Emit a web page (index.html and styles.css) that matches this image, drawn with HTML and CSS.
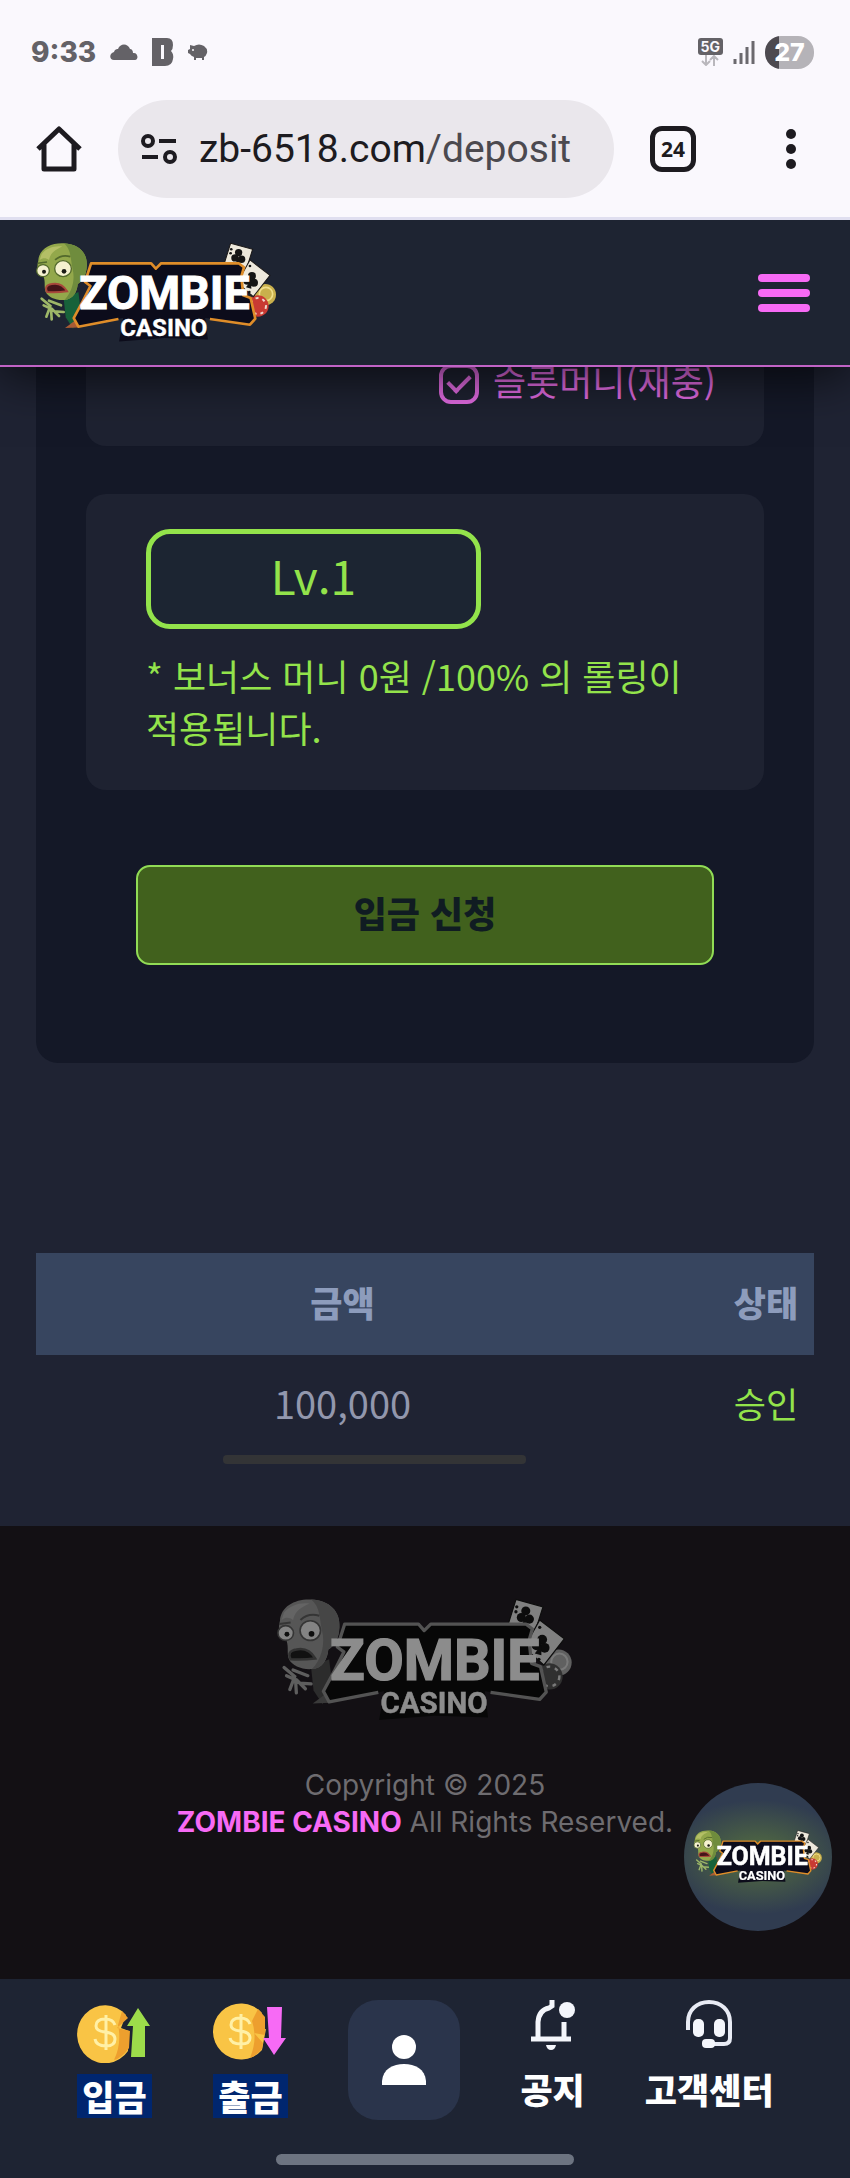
FILE: index.html
```html
<!DOCTYPE html>
<html lang="ko">
<head>
    <meta charset="UTF-8">
    <meta name="viewport" content="width=device-width, initial-scale=1.0">
    <title>ZOMBIE CASINO</title>
    <link rel="stylesheet" href="styles.css">
</head>
<body>
    <div class="status-bar">
        <div class="status-left">
            <span class="clock">9:33</span>
            <svg width="28" height="16" viewBox="0 0 28 16"><path d="M4 16 C-1 16 -1 9 4 8 C5 5 7 5 8 5 C10 -1 18 -1 20 5 C22 5 23 7 23 9 C28 8 29 16 25 16 Z" fill="#646267"/></svg>
            <svg width="22" height="28" viewBox="0 0 22 28"><path d="M0 0 H15 Q21 0 21 7 Q21 11 19 13 Q22 16 21 21 Q20 28 13 28 H0 Z" fill="#646267"/><path d="M9 7 H12 V21 H9 Z" fill="#faf8fd"/></svg>
            <svg width="20" height="16" viewBox="0 0 20 16"><path d="M2 1 L6 2 Q11 -1 16 2 Q20 5 19 9 Q18 12 16 13 V16 H14 V14 H8 V16 H6 V13 Q3 12 2 10 L0 9 V6 L2 5 Z" fill="#646267"/><circle cx="5" cy="6" r="1" fill="#faf8fd"/></svg>
        </div>
        <div class="status-right">
            <div class="network">
                <span class="network-type">5G</span>
                <svg width="18" height="11" viewBox="0 0 18 11"><path d="M5 0 V10 M1 6 L5 10 L9 6 M13 11 V1 M9 5 L13 1 L17 5" fill="none" stroke="#b9b7bc" stroke-width="2"/></svg>
            </div>
            <svg width="22" height="23" viewBox="0 0 22 23"><path d="M2 18 V23 M8 12 V23 M14 6 V23 M20 0 V23" stroke="#6b696e" stroke-width="3"/></svg>
            <span class="battery">27</span>
        </div>
    </div>

    <div class="browser-bar">
        <button class="browser-btn" aria-label="Home">
            <svg width="46" height="46" viewBox="0 0 46 46"><path d="M2 23 L23 3 L44 23 M8 18 V43 H38 V18" fill="none" stroke="#1d1b20" stroke-width="5" stroke-linejoin="round"/></svg>
        </button>
        <button class="address">
            <svg width="38" height="32" viewBox="0 0 38 32"><g fill="none" stroke="#1d1b20" stroke-width="4"><circle cx="8" cy="8" r="5"/><path d="M19 8 H36 M2 24 H18"/><circle cx="30" cy="24" r="5"/></g></svg>
            <span class="url">zb-6518.com<span class="url-path">/deposit</span></span>
        </button>
        <button class="browser-btn tab-count" aria-label="Tabs">24</button>
        <button class="browser-btn more" aria-label="More">
            <svg width="10" height="40" viewBox="0 0 10 40"><g fill="#1d1b20"><circle cx="5" cy="5" r="5"/><circle cx="5" cy="20" r="5"/><circle cx="5" cy="35" r="5"/></g></svg>
        </button>
    </div>

    <header class="site-header">
        <a href="#" aria-label="ZOMBIE CASINO">
            <svg class="logo" viewBox="40 60 740 310">
                <g id="logo">
                    <!-- zombie -->
                    <path d="M132 232 L176 212 L182 262 L160 322 L138 288 Z" fill="#17623a"/>
                    <path d="M136 320 L168 296 L178 318 Z" fill="#a85b35"/>
                    <path d="M56 118 C58 82 94 64 132 66 C178 68 204 96 201 134 C200 160 190 180 174 188 C172 212 160 234 134 236 C110 238 86 228 78 212 C72 196 78 184 72 166 C54 160 50 140 56 118 Z" fill="#93a84b"/>
                    <path d="M132 66 C178 68 204 96 201 134 C200 160 190 180 174 188 C172 212 160 234 134 236 C156 214 168 176 158 140 C152 108 154 84 132 66 Z" fill="#6f8c3d"/>
                    <path d="M66 98 C80 80 108 72 128 76 C110 84 92 94 88 116 C80 110 70 108 60 116 Z" fill="#b4bf66"/>
                    <ellipse cx="70" cy="148" rx="19" ry="18" fill="#f5f1cf" stroke="#53692c" stroke-width="4"/>
                    <ellipse cx="130" cy="142" rx="25" ry="24" fill="#f5f1cf" stroke="#53692c" stroke-width="4"/>
                    <circle cx="73" cy="151" r="6" fill="#1b1b16"/>
                    <circle cx="133" cy="150" r="7" fill="#1b1b16"/>
                    <path d="M54 126 L82 122 M106 116 Q126 98 152 106" fill="none" stroke="#53692c" stroke-width="5"/>
                    <path d="M82 212 Q72 192 96 188 Q126 182 142 210 Q112 214 82 212 Z" fill="#451419" stroke="#a8483b" stroke-width="6"/>
                    <path d="M66 232 L92 254 L80 286 M72 252 L94 262 L96 294 M88 238 L124 252 M96 262 L118 284 M104 270 L132 272" fill="none" stroke="#9db768" stroke-width="8" stroke-linecap="round"/>
                    <!-- chips and cards -->
                    <circle cx="736" cy="220" r="32" fill="#c9b04c"/>
                    <circle cx="738" cy="218" r="20" fill="none" stroke="#f1df8a" stroke-width="5"/>
                    <circle cx="714" cy="254" r="32" fill="#c93a33"/>
                    <circle cx="714" cy="254" r="24" fill="none" stroke="#f0d9cf" stroke-width="6" stroke-dasharray="9 12"/>
                    <path d="M632 66 L698 84 L678 148 L612 130 Z" fill="#eee9dc" stroke="#1a1716" stroke-width="3"/>
                    <path d="M690 116 L750 162 L700 226 L652 184 Z" fill="#eee9dc" stroke="#1a1716" stroke-width="3"/>
                    <g fill="#151515">
                        <circle cx="656" cy="94" r="11"/><circle cx="645" cy="110" r="11"/><circle cx="665" cy="114" r="11"/>
                        <path d="M654 106 L646 130 L662 132 Z"/>
                        <circle cx="696" cy="164" r="12"/><circle cx="682" cy="178" r="12"/><circle cx="702" cy="184" r="12"/>
                        <path d="M694 176 L678 198 L694 202 Z"/>
                        <circle cx="634" cy="84" r="4"/><circle cx="632" cy="96" r="4"/>
                        <circle cx="690" cy="134" r="4"/><circle cx="688" cy="212" r="4"/>
                    </g>
                    <!-- plate -->
                    <path d="M214 126 L394 126 L408 142 L424 126 L656 126 L672 138 L664 166 L670 222 L692 230 L706 292 L690 310 L556 290 L564 354 L434 350 L298 360 L310 290 L176 316 L162 290 L190 238 L212 194 L196 182 Z" fill="#0c0c1b"/>
                    <path d="M296 293 L176 316 L162 290 L190 238 L212 194 L196 182 L214 126 L394 126 L408 142 L424 126 L656 126 L672 138 L664 166 L670 222 L692 230 L706 292 L690 310 L570 293" fill="none" stroke="#df8d29" stroke-width="8" stroke-linejoin="round"/>
                    <text class="logo-zombie" x="434" y="262" text-anchor="middle">ZOMBIE</text>
                    <text class="logo-casino" x="432" y="344" text-anchor="middle">CASINO</text>
                </g>
            </svg>
        </a>
        <button class="menu-btn" aria-label="메뉴"><span></span><span></span><span></span></button>
    </header>

    <main class="content">
        <section class="deposit">
            <div class="box bonus-box">
                <label class="check"><input type="checkbox" checked><span>슬롯머니(재충)</span></label>
            </div>
            <div class="box level-box">
                <button class="level">Lv.1</button>
                <p class="notice">* 보너스 머니 0원 /100% 의 롤링이 적용됩니다.</p>
            </div>
            <button class="submit">입금 신청</button>
        </section>

        <table class="history">
            <thead>
                <tr><th>금액</th><th>상태</th></tr>
            </thead>
            <tbody>
                <tr><td class="amount">100,000</td><td class="approved">승인</td></tr>
            </tbody>
        </table>
        <div class="scroll-thumb"></div>
    </main>

    <footer class="site-footer">
        <svg class="logo" viewBox="40 60 740 310"><use href="#logo"/></svg>
        <p>Copyright © 2025<br><strong>ZOMBIE CASINO</strong> All Rights Reserved.</p>
    </footer>

    <a class="floating" href="#" aria-label="ZOMBIE CASINO"><svg class="logo" viewBox="40 60 740 310"><use href="#logo"/></svg></a>

    <nav class="bottom-nav">
        <div class="nav-items">
            <a class="nav-item money" href="#">
                <svg width="76" height="60" viewBox="0 0 76 60">
                    <path d="M50 12 A28 29 0 1 0 52 48 L53 28 L45 25 Z" fill="#f9c445"/>
                    <path d="M46 8 L52 15 L41 25 L54 28 L53 45 Q46 55 38 57 Q46 40 42 22 Z" fill="#ed9f2e"/>
                    <path d="M39 22 Q37 16 29 16 Q20 16 20 23 Q20 28 29 29 Q39 30 39 36 Q39 43 30 43 Q20 43 19 36 M30 12 V47" fill="none" stroke="#fff0a6" stroke-width="3"/>
                    <path d="M62 5 L74 23 H69 V54 H55 L57 23 H51 Z" fill="#9ddc4a"/>
                </svg>
                <span class="marked">입금</span>
            </a>
            <a class="nav-item money" href="#">
                <svg width="76" height="60" viewBox="0 0 76 60">
                    <path d="M50 10 A28 28 0 1 0 50 47 L54 26 L44 28 Z" fill="#f9c445"/>
                    <path d="M46 6 L53 14 L53 32 L42 30 L51 40 L50 46 Q44 53 38 55 Q46 36 40 18 Z" fill="#ed9f2e"/>
                    <path d="M38 21 Q36 15 28 15 Q19 15 19 22 Q19 27 28 28 Q38 29 38 35 Q38 41 29 41 Q19 41 18 35 M29 11 V46" fill="none" stroke="#fff0a6" stroke-width="3"/>
                    <path d="M55 4 H70 L69 35 H74 L62 52 L51 35 H57 Z" fill="#f76af5"/>
                </svg>
                <span class="marked">출금</span>
            </a>
            <a class="nav-user" href="#" aria-label="내 정보">
                <svg width="46" height="50" viewBox="0 0 46 50"><circle cx="23" cy="12" r="12" fill="#fff"/><path d="M1 50 V46 C2 34 12 29 23 29 C34 29 44 34 45 46 V50 Z" fill="#fff"/></svg>
            </a>
            <a class="nav-item" href="#">
                <svg width="44" height="50" viewBox="0 0 44 50"><g fill="none" stroke="#f4f6fb" stroke-width="5"><path d="M7 38 V22 Q8 10 18 8 L21 6 V0 M33 22 V38"/><path d="M0 39 H40"/></g><circle cx="36" cy="10" r="8" fill="#f4f6fb"/><path d="M15 45 H25 Q24 50 20 50 Q16 50 15 45 Z" fill="#f4f6fb"/></svg>
                <span>공지</span>
            </a>
            <a class="nav-item" href="#">
                <svg width="48" height="50" viewBox="0 0 48 50"><path d="M3 30 V22 C3 10 12 2 24 2 C36 2 45 10 45 22 V38 Q45 44 39 44 H24" fill="none" stroke="#e8ebf4" stroke-width="4"/><g fill="#f4f6fb"><rect x="8" y="19" width="11" height="18" rx="5"/><rect x="29" y="19" width="11" height="18" rx="5"/><rect x="17" y="39" width="13" height="9" rx="4"/></g></svg>
                <span>고객센터</span>
            </a>
        </div>
        <div class="home-indicator"></div>
    </nav>
</body>
</html>
```
FILE: styles.css
```css
* {
    box-sizing: border-box;
}
body {
    margin: 0;
    background-color: #1f2333;
    color: #ffffff;
    font-family: "Noto Sans CJK KR", sans-serif;
}
button {
    padding: 0;
    border: none;
    background: none;
    font-family: inherit;
    color: inherit;
    cursor: pointer;
}
a {
    color: inherit;
    text-decoration: none;
}
svg {
    display: block;
}

/* Logo */
.logo {
    width: 247px;
    height: 104px;
}
.logo-zombie,
.logo-casino {
    font-family: Roboto, sans-serif;
    font-weight: 700;
    fill: #ffffff;
    stroke: #ffffff;
    stroke-width: 3px;
}
.logo-zombie {
    font-size: 140px;
}
.logo-casino {
    font-size: 72px;
    stroke-width: 1px;
}

/* Phone status bar */
.status-bar {
    display: flex;
    justify-content: space-between;
    align-items: center;
    height: 100px;
    padding: 4px 36px 0 31px;
    background-color: #faf8fd;
    color: #646267;
    font-family: Inter, sans-serif;
}
.status-left,
.status-right {
    display: flex;
    align-items: center;
    gap: 14px;
}
.status-right {
    gap: 10px;
}
.clock {
    font-size: 28px;
    font-weight: 800;
}
.network {
    display: flex;
    flex-direction: column;
    align-items: center;
}
.network-type {
    padding: 0 3px;
    border-radius: 3px;
    background-color: #646267;
    color: #faf8fd;
    font-size: 14px;
    font-weight: 700;
    line-height: 17px;
}
.battery {
    width: 49px;
    border-radius: 16px;
    background: linear-gradient(90deg, #4d4a50 28%, #b5b3b8 28%);
    color: #ffffff;
    font-size: 25px;
    font-weight: 800;
    line-height: 33px;
    text-align: center;
}

/* Browser toolbar */
.browser-bar {
    display: flex;
    align-items: center;
    gap: 36px;
    padding: 0 36px 19px;
    border-bottom: 3px solid #e0dff0;
    background-color: #faf8fd;
    color: #1d1b20;
}
.browser-btn {
    display: flex;
    align-items: center;
    justify-content: center;
    width: 46px;
    height: 46px;
}
.address {
    display: flex;
    flex: 1;
    align-items: center;
    gap: 21px;
    height: 98px;
    padding-left: 22px;
    border-radius: 49px;
    background-color: #eae7ec;
}
.url {
    font-family: Roboto, sans-serif;
    font-size: 39px;
}
.url-path {
    color: #4b494f;
}
.tab-count {
    border: 5px solid #1d1b20;
    border-radius: 12px;
    font-family: "Open Sans", sans-serif;
    font-size: 21px;
    font-weight: 700;
}
.more {
    margin-left: 36px;
}

/* Site header */
.site-header {
    position: relative;
    z-index: 2;
    display: flex;
    justify-content: space-between;
    align-items: center;
    padding: 21px 40px 20px 33px;
    border-bottom: 2px solid #c163c6;
    background-color: #1e2432;
    box-shadow: 0 8px 48px rgba(0, 0, 0, 0.7);
    clip-path: inset(0 0 -80px 0); /* shadow only below the bar */
}
.menu-btn {
    display: flex;
    flex-direction: column;
    gap: 7px;
    width: 52px;
}
.menu-btn span {
    height: 8px;
    border-radius: 4px;
    background-color: #f76af5;
}

/* Deposit form, scrolled under the header */
.content {
    margin-top: -20px;
    padding: 0 36px 62px;
}
.deposit {
    display: flex;
    flex-direction: column;
    padding: 0 50px 98px;
    border-radius: 0 0 22px 22px;
    background-color: #141827;
}
.box {
    border-radius: 20px;
    background-color: #1e2231;
}
.bonus-box {
    display: flex;
    justify-content: flex-end;
    padding: 17px 48px 42px;
    border-radius: 0 0 20px 20px;
}
.check {
    display: flex;
    align-items: center;
    gap: 14px;
    height: 40px;
    color: #e06ae0;
    font-size: 36px;
}
.check span {
    padding-bottom: 8px;
}
.check input {
    display: flex;
    align-items: center;
    justify-content: center;
    width: 40px;
    height: 40px;
    margin: 0;
    border: 4px solid #e06ae0;
    border-radius: 12px;
    appearance: none;
}
.check input:checked::before {
    content: "";
    width: 18px;
    height: 10px;
    margin-bottom: 6px;
    border: solid #e06ae0;
    border-width: 0 0 4px 4px;
    transform: rotate(-45deg);
}
.level-box {
    margin-top: 48px;
    padding: 35px 60px 37px;
}
.level {
    width: 60%;
    height: 100px;
    padding-bottom: 8px;
    border: 5px solid #93e34b;
    border-radius: 24px;
    background-color: #1c2532;
    color: #93e34b;
    font-size: 46px;
}
.notice {
    margin: 20px 0 0;
    color: #93e34b;
    font-size: 36px;
    line-height: 52px;
}
.submit {
    height: 100px;
    margin: 75px 50px 0;
    padding-bottom: 6px;
    border: 2px solid #91dc55;
    border-radius: 14px;
    background-color: #41611d;
    color: #101c22;
    font-size: 36px;
    font-weight: 900;
}

/* Deposit history */
.history {
    width: 100%;
    margin-top: 190px;
    border-collapse: collapse;
    color: #9297ad;
    font-size: 35px;
    text-align: center;
}
.history th,
.history td {
    height: 100px;
    padding: 0 0 6px;
}
.history th {
    height: 102px;
    background-color: #37455f;
    color: #8d9cbc;
    font-weight: 900;
}
.history th:first-child,
.history td:first-child {
    padding-right: 69px;
}
.history th:last-child {
    width: 96px;
}
.history .amount {
    font-size: 38px;
}
.history .approved {
    color: #93e34b;
}
.scroll-thumb {
    width: 39%;
    height: 9px;
    margin-left: 24%;
    border-radius: 4px;
    background-color: #333436;
}

/* Footer */
.site-footer {
    display: flex;
    flex-direction: column;
    align-items: center;
    padding: 71px 20px 138px;
    background-color: #131014;
    color: #6e6c70;
    font-family: Inter, sans-serif;
    font-size: 28px;
    line-height: 37px;
    text-align: center;
}
.site-footer .logo {
    width: 304px;
    height: 127px;
    filter: grayscale(1) brightness(0.55);
}
.site-footer p {
    margin: 43px 0 0;
}
.site-footer strong {
    color: #f76af5;
}
.floating {
    position: fixed;
    right: 18px;
    bottom: 247px;
    display: flex;
    align-items: center;
    justify-content: center;
    width: 148px;
    height: 148px;
    border-radius: 50%;
    background: radial-gradient(ellipse 70px 44px, #56703f, #303c50 130%);
}
.floating .logo {
    width: 132px;
    height: 56px;
}

/* Bottom navigation */
.bottom-nav {
    display: flex;
    flex-direction: column;
    align-items: center;
    padding: 21px 0 13px;
    background-color: #1e2433;
    font-size: 35px;
    font-weight: 900;
    line-height: 44px;
}
.nav-items {
    display: flex;
    justify-content: center;
    gap: 60px;
}
.nav-item {
    display: flex;
    flex-direction: column;
    align-items: center;
    gap: 17px;
}
.money {
    gap: 11px;
    padding-top: 3px;
}
.marked {
    padding: 0 5px;
    background-color: #00266f;
}
.nav-user {
    display: flex;
    align-items: center;
    justify-content: center;
    width: 112px;
    height: 120px;
    border-radius: 30px;
    background-color: #2a344b;
}
.home-indicator {
    width: 35%;
    height: 11px;
    margin-top: 34px;
    border-radius: 6px;
    background-color: #6d7481;
}
```
